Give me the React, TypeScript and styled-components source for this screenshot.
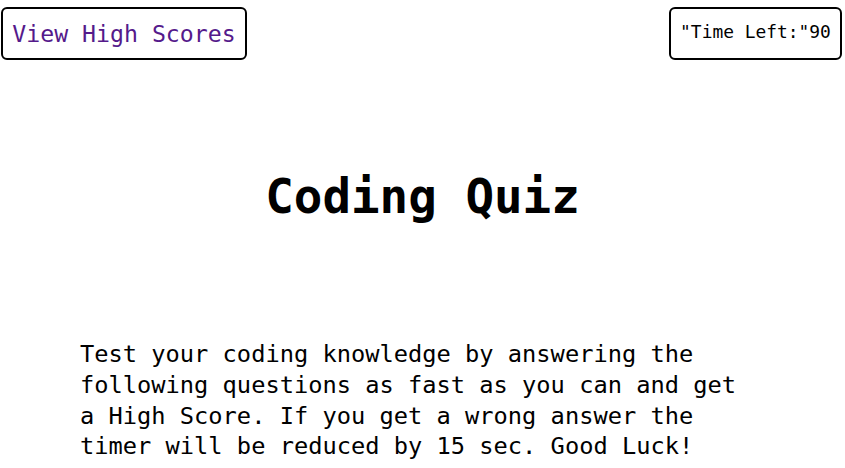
import React from "react";
import styled, { createGlobalStyle } from "styled-components";

const GlobalStyle = createGlobalStyle`
  html, body {
    margin: 0;
    padding: 0;
    background: #ffffff;
  }
  body {
    font-family: "DejaVu Sans Mono", "Liberation Mono", monospace;
    color: #000000;
  }
`;

const Page = styled.div`
  width: 845px;
  min-height: 468px;
  display: flex;
  flex-direction: column;
`;

const Header = styled.header`
  display: flex;
  justify-content: space-between;
  align-items: flex-start;
  padding: 7px 3px 0 1px;
`;

const HighScoresLink = styled.a`
  box-sizing: border-box;
  width: 246px;
  height: 53px;
  display: flex;
  align-items: center;
  justify-content: center;
  border: 2px solid #000000;
  border-radius: 6px;
  font-size: 23.2px;
  color: #551a8b;
  text-decoration: none;
  cursor: pointer;
`;

const Timer = styled.div`
  box-sizing: border-box;
  width: 173px;
  height: 53px;
  display: flex;
  align-items: center;
  justify-content: center;
  padding-bottom: 5px;
  border: 2px solid #000000;
  border-radius: 6px;
  font-size: 17.9px;
  white-space: pre;
`;

const Title = styled.h1`
  margin: 109px 0 0 0;
  text-align: center;
  font-size: 47.5px;
  line-height: 56px;
  font-weight: bold;
`;

const Description = styled.p`
  margin: 114px 0 0 80px;
  width: 670px;
  font-size: 23.7px;
  line-height: 30.8px;
`;

export default function App() {
  return (
    <>
      <GlobalStyle />
      <Page>
        <Header>
          <HighScoresLink href="#highscores">View High Scores</HighScoresLink>
          <Timer>"Time Left:"90</Timer>
        </Header>
        <Title>Coding Quiz</Title>
        <Description>
          Test your coding knowledge by answering the following questions as
          fast as you can and get a High Score. If you get a wrong answer the
          timer will be reduced by 15 sec. Good Luck!
        </Description>
      </Page>
    </>
  );
}
